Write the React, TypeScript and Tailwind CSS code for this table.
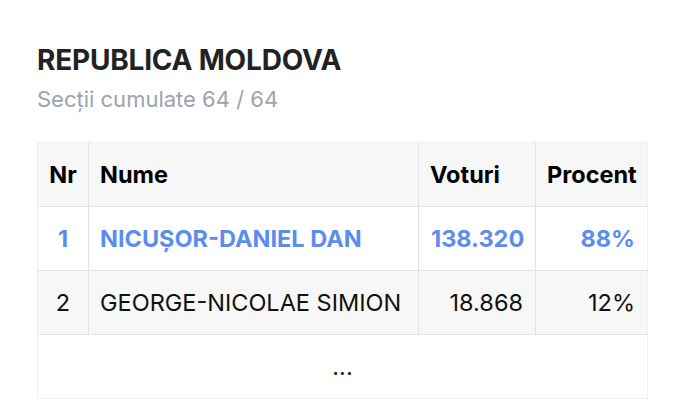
import React from 'react';

const rows = [
  { nr: 1, name: 'NICUȘOR-DANIEL DAN', votes: '138.320', pct: '88%', lead: true },
  { nr: 2, name: 'GEORGE-NICOLAE SIMION', votes: '18.868', pct: '12%', lead: false },
];

export default function App() {
  return (
    <div className="min-h-screen bg-white font-['Inter',sans-serif] pl-[37px] pt-[44px]">
      <h1 className="text-[28px] font-bold leading-[32px] tracking-[-0.2px] text-[#222]">REPUBLICA MOLDOVA</h1>
      <p className="text-[22px] leading-[26px] mt-[10px] text-[#9ca3af]">Secții cumulate 64 / 64</p>

      <table className="mt-[30px] w-[611px] table-fixed border-collapse border border-[#f0f0f0] text-[23.5px]">
        <thead>
          <tr className="bg-[#f7f7f7] h-[64px]">
            <th className="w-[51px] border-r border-b border-[#dfe2e6] text-center font-bold text-black">Nr</th>
            <th className="w-[330px] border-r border-b border-[#dfe2e6] px-[11px] text-left font-bold text-black">Nume</th>
            <th className="w-[117px] border-r border-b border-[#dfe2e6] px-[11px] text-left font-bold text-black">Voturi</th>
            <th className="border-b border-[#dfe2e6] px-[11px] text-left font-bold text-black">Procent</th>
          </tr>
        </thead>
        <tbody>
          {rows.map((r) => (
            <tr
              key={r.nr}
              className={`h-[64px] ${r.lead ? 'bg-white text-[#5b8def] font-bold' : 'bg-[#f7f7f7] text-[#111]'}`}
            >
              <td className="border-r border-b border-[#dfe2e6] text-center">{r.nr}</td>
              <td className="border-r border-b border-[#dfe2e6] px-[11px] whitespace-nowrap">{r.name}</td>
              <td className="border-r border-b border-[#dfe2e6] px-3 text-right">{r.votes}</td>
              <td className="border-b border-[#dfe2e6] px-3 text-right">{r.pct}</td>
            </tr>
          ))}
          <tr className="h-[64px] bg-white">
            <td colSpan={4} className="text-center text-[#111]">...</td>
          </tr>
        </tbody>
      </table>
    </div>
  );
}
